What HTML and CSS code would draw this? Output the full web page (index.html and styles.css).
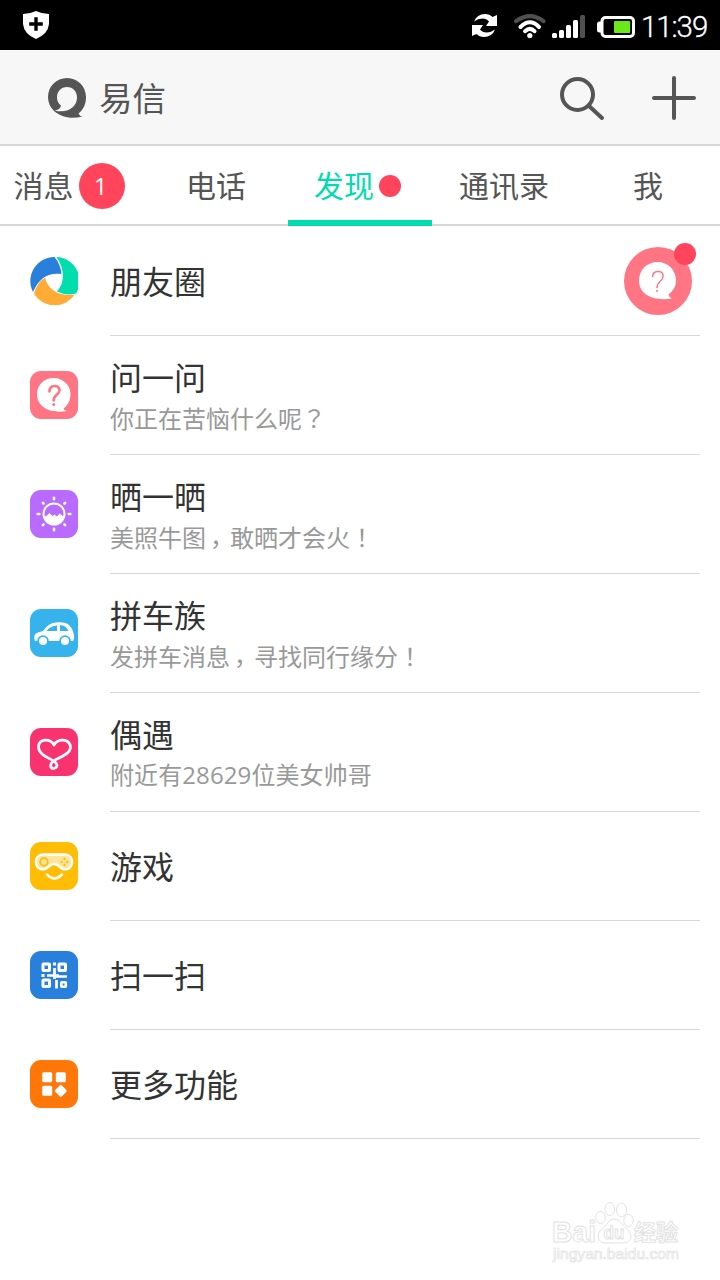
FILE: index.html
```html
<!DOCTYPE html>
<html lang="zh-CN">
<head>
<meta charset="utf-8">
<title>易信</title>
<link rel="stylesheet" href="styles.css">
</head>
<body>
<div class="screen">
  <div class="status">
    <svg class="shield" width="28" height="30" viewBox="0 0 28 30"><path d="M14 1 Q20 4 27 4 V14 Q26 24 14 29 Q2 24 1 14 V4 Q8 4 14 1Z" fill="#fff"/><path d="M14 8V20M8 14H20" stroke="#000" stroke-width="4" stroke-linecap="square" stroke-dasharray="none" transform="translate(2.100 2.100) scale(.85)"/></svg>
    <svg class="signals" width="180" height="50" viewBox="0 0 180 50">
      <path d="M14 21.500Q17 14 25 14Q29.500 14 32.500 17L37 15V26H26L29 21.500Q26.500 18.500 22.500 18.500Q18 18.500 14 21.500ZM35 29.500Q32 37 24 37Q19.500 37 16.500 34L12 36V25H23L20 29.500Q22.500 32.500 26.500 32.500Q31 32.500 35 29.500Z" fill="#fff"/>
      <g fill="none" stroke-width="4" stroke-linecap="round"><path d="M56 21.200Q70 11 83.500 21.200" stroke="#505050"/><path d="M60.500 27Q70 17.500 79 27M65 31.200Q70 26.500 74.500 31.200" stroke="#fff"/></g>
      <circle cx="69.800" cy="35.600" r="2.600" fill="#fff"/>
      <g fill="#fff"><rect x="92" y="33" width="5" height="5" rx="1.500"/><rect x="99" y="30" width="5" height="8" rx="1.500"/><rect x="106" y="25" width="5" height="13" rx="1.500"/><rect x="113" y="20" width="5" height="18" rx="1.500"/></g>
      <rect x="120" y="15" width="5" height="23" rx="1.500" fill="#505050"/>
      <rect x="137" y="21.500" width="6" height="11" rx="2.500" fill="#fff"/>
      <rect x="142" y="17.500" width="31.500" height="19" rx="3.500" fill="#000" stroke="#fff" stroke-width="3"/>
      <rect x="154" y="21" width="16.200" height="12" rx="1" fill="#6be817"/>
    </svg>
    <span class="time">11:39</span>
  </div>

  <header class="header">
    <svg class="logo" width="40" height="42" viewBox="0 0 40 42"><path d="M19 1C8.500 1 0 9.500 0 20Q0 28 6 34C13 40 23 42.500 34.500 39.500Q31.500 39 30.500 36.500C35.500 32.500 38 27 38 20C38 9.500 29.500 1 19 1ZM19 10C25 10 29 14.500 29 20.500C29 29 21 37 6.500 33.500Q12 33 13 28.500Q9 25.500 9 20.500C9 14.500 13 10 19 10Z" fill="#555"/></svg>
    <h1 class="app-name">易信</h1>
    <svg class="search" width="48" height="48" viewBox="0 0 48 48" fill="none" stroke="#555" stroke-width="4"><circle cx="19.500" cy="20.500" r="15.500"/><path d="M31 32L44 44" stroke-linecap="round"/></svg>
    <svg class="plus" width="44" height="44" viewBox="0 0 44 44"><path d="M22 2V42M2 22H42" stroke="#555" stroke-width="4" stroke-linecap="round"/></svg>
  </header>

  <nav class="tabs">
    <div class="tab tab-messages">消息<span class="badge">1</span></div>
    <div class="tab">电话</div>
    <div class="tab active">发现<span class="dot"></span></div>
    <div class="tab">通讯录</div>
    <div class="tab">我</div>
  </nav>

  <main class="list">
    <div class="row first">
      <svg class="icon" viewBox="0 0 48 48"><path d="M3 35A24 24 0 0 1 24.500 0Q30.500 7 31.500 17C17 15 9 22 3 35Z" fill="#287fdc"/><path d="M26.500 0A24 24 0 0 1 46 36.500Q36 39 27 34.500C35 26 35 12 26.500 0Z" fill="#00deae"/><path d="M15 20.500C18 33 29 39.500 44.500 37.800A24 24 0 0 1 4 36.500Q7 26 15 20.500Z" fill="#ffab36"/></svg>
      <div class="body"><div class="title">朋友圈</div>
        <div class="ask-avatar">
          <svg width="68" height="68" viewBox="0 0 68 68"><circle cx="34" cy="34" r="34" fill="#ff7584"/><path d="M33.500 15C23 15 15 23 15 33.500C15 47 28 54.500 48 51.500Q45 50.500 44.500 47.500C49 44 52 39.500 52 33.500C52 23 44 15 33.500 15Z" fill="#fff"/><path d="M28.500 30Q28.500 24.500 34 24.500T39 29.500Q39 32 36 34.500T33 41" fill="none" stroke="#ff7584" stroke-width="1.500"/><circle cx="33" cy="44" r="1" fill="#ff7584"/></svg>
          <span class="dot notice"></span>
        </div>
      </div>
    </div>
    <div class="row double">
      <svg class="icon" viewBox="0 0 48 48"><rect width="48" height="48" rx="11" fill="#ff7584"/><path d="M23.500 7C14 7 7 14 7 23C7 36 20 43 37 40Q34 39.500 33.500 37.500C38 34 40.500 29.500 40.500 23C40.500 14 33 7 23.500 7Z" fill="#fff"/><path d="M19.500 20.500Q19.500 15 24.500 15T29.500 19.500Q29.500 21.500 26.500 24T23.700 29.500" fill="none" stroke="#ff7584" stroke-width="2.600" stroke-linecap="round"/><circle cx="23.700" cy="33.500" r="1.500" fill="#ff7584"/></svg>
      <div class="body"><div class="title">问一问</div><div class="sub">你正在苦恼什么呢<span class="centered" lang="zh-TW">？</span></div></div>
    </div>
    <div class="row double">
      <svg class="icon" viewBox="0 0 48 48"><rect width="48" height="48" rx="11" fill="#b96aff"/><circle cx="24" cy="24" r="10.500" fill="none" stroke="#fff" stroke-width="2"/><path d="M14 27L17 25.500L19.500 23L22.500 26L24.500 24.500L27 26.500L29.500 23.500L34 27Q31 34.500 24 34.500T14 27Z" fill="#fff"/><path d="M24 7.700V9.300M24 38.700V40.300M7.700 24H9.300M38.700 24H40.300M12.900 12.900L13.500 13.500M34.500 34.500L35.100 35.100M35.100 12.900L34.500 13.500M13.500 34.500L12.900 35.100" stroke="#fff" stroke-width="2.600" stroke-linecap="round"/></svg>
      <div class="body"><div class="title">晒一晒</div><div class="sub">美照牛图<span class="comma">，</span>敢晒才会火<span class="centered" lang="zh-TW">！</span></div></div>
    </div>
    <div class="row double">
      <svg class="icon" viewBox="0 0 48 48"><rect width="48" height="48" rx="11" fill="#36b3ed"/><path d="M5 32Q2.500 25 8 23.500L13 22Q19 13.500 26 13.500Q35 12.500 39 16Q43 20 43.500 24Q45 30 43 32Z" fill="#fff"/><path d="M16.500 22Q20 17 27 16.500V22ZM30 16.300Q36 16 38.500 22H30Z" fill="#36b3ed"/><circle cx="13" cy="32" r="5.800" fill="#36b3ed"/><circle cx="35" cy="32" r="5.800" fill="#36b3ed"/><circle cx="13" cy="32" r="4" fill="#fff"/><circle cx="35" cy="32" r="4" fill="#fff"/></svg>
      <div class="body"><div class="title">拼车族</div><div class="sub">发拼车消息<span class="comma">，</span>寻找同行缘分<span class="centered" lang="zh-TW">！</span></div></div>
    </div>
    <div class="row double">
      <svg class="icon" viewBox="0 0 48 48"><rect width="48" height="48" rx="11" fill="#f83370"/><path d="M24 17C20 10 9 10.500 8.500 19C8.500 27 20 30 25 34C29 37.500 26 40.500 23.500 40.500C20 40.500 19.500 36 23.500 33C29 29 40.500 26.500 40.500 19C39.500 10.500 28 10 24 17Z" fill="none" stroke="#fff" stroke-width="2.700" stroke-linejoin="round"/></svg>
      <div class="body"><div class="title">偶遇</div><div class="sub digits">附近有28629位美女帅哥</div></div>
    </div>
    <div class="row">
      <svg class="icon" viewBox="0 0 48 48"><rect width="48" height="48" rx="11" fill="#ffbd05"/><path d="M13 12.500H35C44.500 12.500 44.500 27.500 35 27.500C30 27.500 29 22 24 22S18 27.500 13 27.500C3.500 27.500 3.500 12.500 13 12.500Z" fill="#ffe59b" stroke="#fff" stroke-width="2.400"/><circle cx="14" cy="20" r="3.800" fill="#ffe59b" stroke="#ffbd05" stroke-width="1.800"/><g fill="#ffbd05"><circle cx="34.500" cy="17" r="1.200"/><circle cx="31.500" cy="20" r="1.200"/><circle cx="37.500" cy="20" r="1.200"/><circle cx="34.500" cy="23" r="1.200"/></g><path d="M17 32.500Q24 40.500 32 32.500" fill="none" stroke="#fff" stroke-width="2.500" stroke-linecap="round"/></svg>
      <div class="body"><div class="title">游戏</div></div>
    </div>
    <div class="row">
      <svg class="icon" viewBox="0 0 48 48"><rect width="48" height="48" rx="11" fill="#287fdc"/><g fill="none" stroke="#fff" stroke-width="3"><rect x="13" y="13" width="6.500" height="6.500" rx=".5"/><rect x="29" y="13" width="6.500" height="6.500" rx=".5"/><rect x="13" y="29" width="6.500" height="6.500" rx=".5"/><rect x="31.300" y="31.300" width="4.500" height="4.500" rx=".5" stroke-width="2.600"/><path d="M24.500 17V28M17 24.500H29M26 25.500H37M26.500 29V37.500" stroke-width="2.700"/></g><path d="M23 11.500h3v3h-3zM11.500 23h3v3h-3z" fill="#fff"/></svg>
      <div class="body"><div class="title">扫一扫</div></div>
    </div>
    <div class="row">
      <svg class="icon" viewBox="0 0 48 48"><rect width="48" height="48" rx="11" fill="#ff7708"/><g fill="#fff"><rect x="12.200" y="12.200" width="10" height="10" rx="1.500"/><rect x="25.800" y="12.200" width="10" height="10" rx="1.500"/><rect x="12.200" y="25.800" width="10" height="10" rx="1.500"/><rect x="26.200" y="26.200" width="9.200" height="9.200" rx="1.300" transform="rotate(45 30.800 30.800)"/></g></svg>
      <div class="body"><div class="title">更多功能</div></div>
    </div>
  </main>

  <footer class="footer">
    <svg class="watermark" width="150" height="80" viewBox="0 0 150 80" fill="#fff" stroke="#e2e2e2" stroke-width="1">
      <text x="12" y="52" font-size="29" font-weight="700" textLength="44" lengthAdjust="spacingAndGlyphs">Bai</text>
      <ellipse cx="60.500" cy="27.500" rx="4.800" ry="6"/><ellipse cx="69.800" cy="19" rx="4.800" ry="6.500"/><ellipse cx="81.500" cy="20" rx="5" ry="6.800"/><ellipse cx="88.500" cy="30.500" rx="4.800" ry="6"/>
      <path d="M74 29C68 29 67 36 62 39C56 43 57 53 65 53H84C92 53 93 44 87 39C82 35 80 29 74 29Z"/>
      <text x="63.500" y="49" font-size="19" font-weight="700" textLength="21" lengthAdjust="spacingAndGlyphs">du</text>
      <text class="watermark-cn" x="94" y="50" font-size="22" font-weight="700" textLength="44">经验</text>
      <text x="13" y="68.500" font-size="15" stroke-width=".7" textLength="126" lengthAdjust="spacingAndGlyphs">jingyan.baidu.com</text>
    </svg>
  </footer>
</div>
</body>
</html>
```
FILE: styles.css
```css
* { box-sizing: border-box; }
body { margin: 0; background: #fff; font-family: "Open Sans", "Noto Sans CJK SC", sans-serif; }
svg { display: block; flex: none; }
.screen { width: 720px; height: 1280px; display: flex; flex-direction: column; overflow: hidden; }

.status { height: 50px; flex: none; background: #000; color: #fff; display: flex; align-items: center; padding-left: 22px; }
.signals { margin-left: auto; }
.time { width: 80px; padding: 4px 0 0 1px; font: 300 29.500px/40px Roboto, sans-serif; letter-spacing: -1.100px; -webkit-text-stroke: 0.300px #fff; }

.header { height: 96px; flex: none; background: #f7f7f7; border-bottom: 2px solid #d8d8d8; display: flex; align-items: center; padding: 0 24px 0 48px; }
.logo { margin-top: 2px; }
.app-name { margin: 2px auto 0 11px; color: #555; font-size: 33.500px; line-height: 48px; font-weight: 400; }
.search { margin: 2px 46px 0 0; }
.plus { margin-top: 2px; }

.tabs { height: 80px; flex: none; display: grid; grid-template-columns: repeat(5, 144px); border-bottom: 2px solid #d8d8d8; }
.tab { height: 80px; display: flex; align-items: center; justify-content: center; color: #555; font-size: 30px; line-height: 40px; }
.tab-messages { padding-right: 6px; }
.badge { width: 46px; height: 46px; margin-left: 5px; border-radius: 50%; background: #ff445b; color: #fff; display: flex; align-items: center; justify-content: center; font: 24px/46px "Open Sans", sans-serif; padding-right: 2px; }
.active { color: #00dbaf; border-bottom: 6px solid #00dbaf; padding: 6px 5px 0 0; }
.dot { width: 22px; height: 22px; margin-left: 5px; border-radius: 50%; background: #ff445b; }

.row { height: 109px; display: flex; align-items: center; padding: 0 20px 0 30px; }
.row.first { height: 110px; }
.row.double { height: 119px; }
.icon { width: 48px; height: 48px; margin-bottom: 2px; }
.first .icon { margin-bottom: 0; }
.body { position: relative; height: 100%; flex: 1; margin-left: 32px; border-bottom: 1px solid #d8d8d8; display: flex; flex-direction: column; justify-content: center; }
.double .body { padding-bottom: 4px; }
.title { color: #333; font-size: 32px; line-height: 48px; padding-top: 2px; }
.sub { color: #999; font-size: 24px; line-height: 32px; white-space: nowrap; }
.digits { letter-spacing: 0.100px; }
.centered { font-family: "Noto Sans CJK TC", sans-serif; }
.comma { display: inline-block; width: 24px; height: 32px; padding-left: 4px; vertical-align: top; font-feature-settings: "halt"; }
.ask-avatar { position: absolute; right: 8px; top: 21px; }
.notice { position: absolute; right: -4px; top: -4px; }

.footer { flex: 1; display: flex; justify-content: flex-end; align-items: flex-end; padding: 0 30px 10px 0; }
.watermark { font-family: "Liberation Sans", sans-serif; }
.watermark-cn { font-family: "Noto Sans CJK SC", sans-serif; }
```
